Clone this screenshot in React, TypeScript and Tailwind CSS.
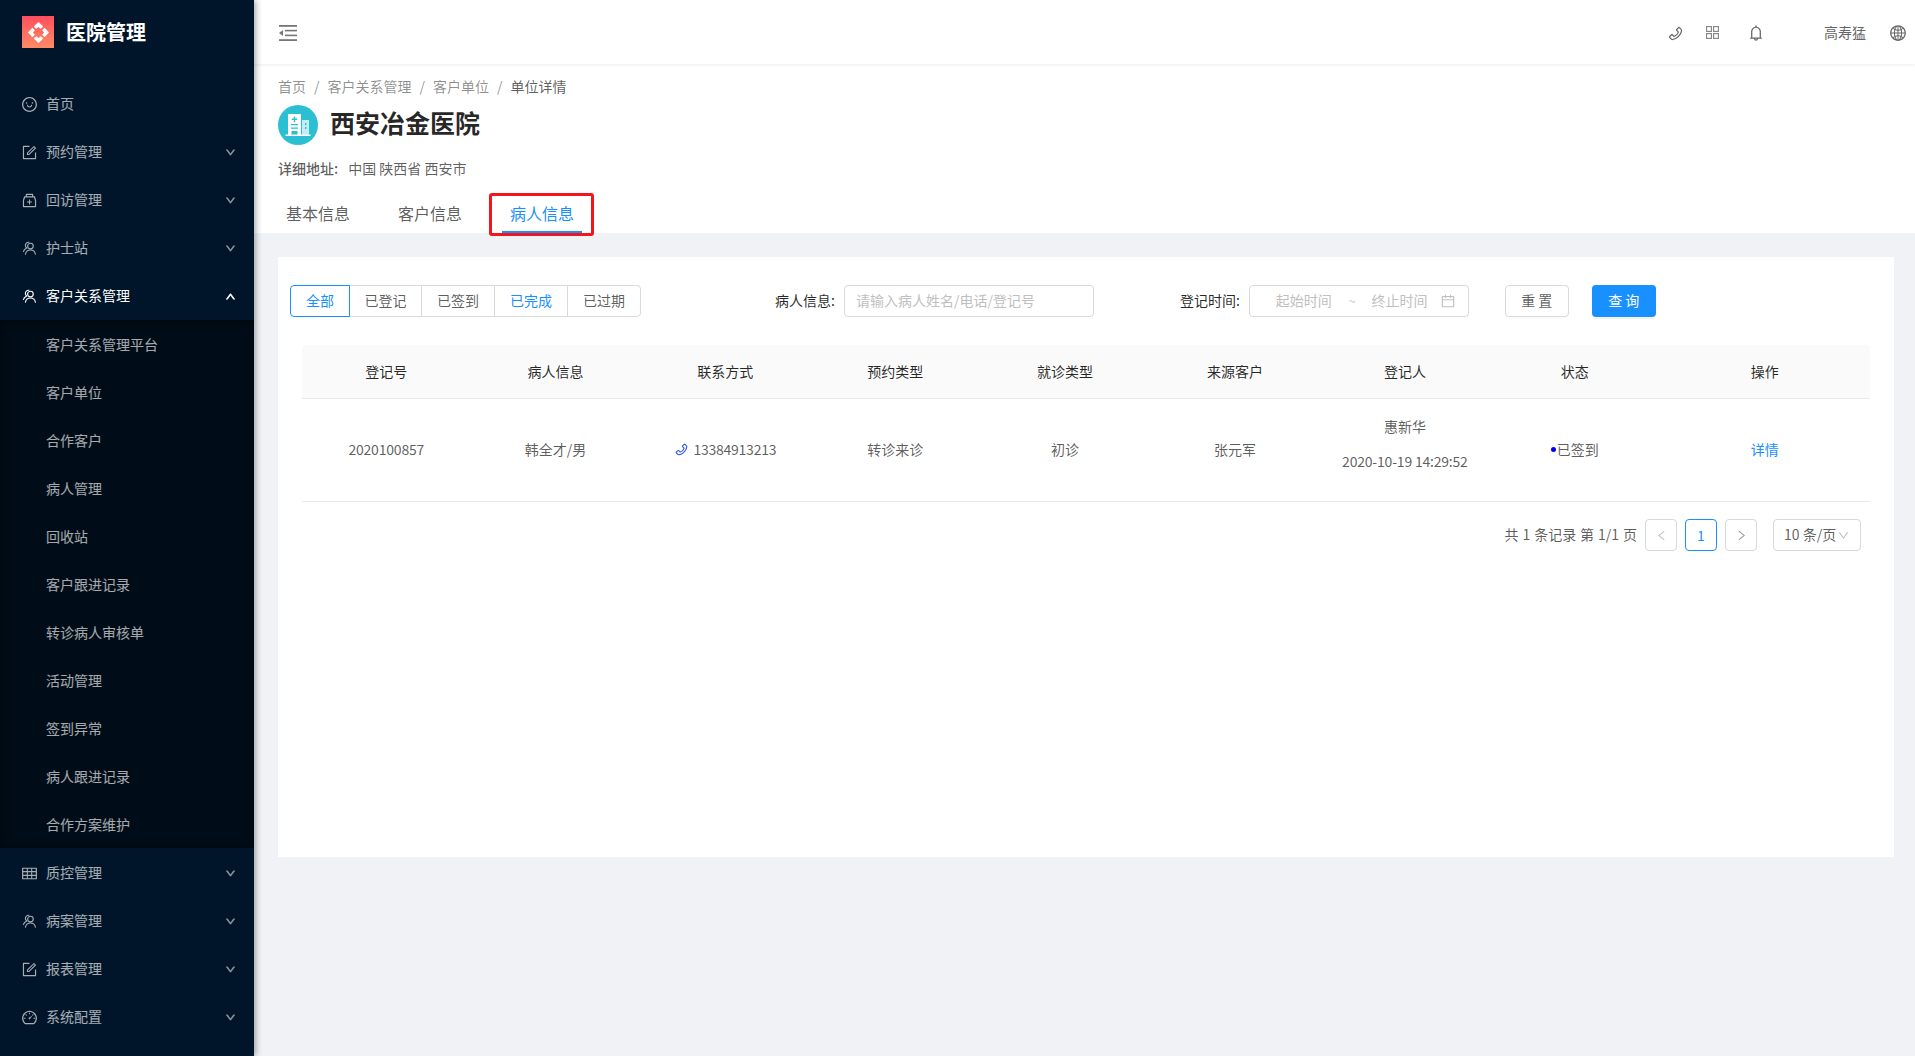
import React from 'react';
import {
  AiOutlineSmile,
  AiOutlineForm,
  AiOutlineMedicineBox,
  AiOutlineTable,
  AiOutlineDashboard,
  AiOutlineDown,
  AiOutlineUp,
  AiOutlineLeft,
  AiOutlineRight,
  AiOutlineBell,
  AiOutlineGlobal,
  AiOutlineCalendar,
  AiOutlinePhone,
} from 'react-icons/ai';

const FONT = '"Noto Sans CJK SC", "Noto Sans", sans-serif';

// 两个人叠在一起的菜单图标
const PeopleIcon = () => (
  <svg viewBox="0 0 16 16" className="w-[15px] h-[15px]" fill="none" stroke="currentColor" strokeWidth="1.2">
    <circle cx="9" cy="5.4" r="3" />
    <path d="M3.6 14.6c.4-3 2.6-5 5.4-5s5 2 5.4 5" />
    <path d="M7.8 1.4A3.4 3.4 0 0 0 3.6 4.6c0 1.2.5 2.2 1.4 2.9C3 8.4 1.8 9.8 1.4 11.6" />
  </svg>
);

const LOBE = 'M12 1 L16.500 5.200 Q17 6 16 6.800 L14.300 8.200 L12 6.200 L9.700 8.200 L8 6.800 Q7 6 7.500 5.200 Z';

const LogoIcon = () => (
  <div className="w-8 h-8 flex items-center justify-center bg-gradient-to-b from-[#ff4d5e] to-[#ff8a64]">
    <svg viewBox="0 0 24 24" className="w-[23px] h-[23px]" fill="#fff">
      <path d={LOBE} />
      <path d={LOBE} transform="rotate(90 12 12)" />
      <path d={LOBE} transform="rotate(180 12 12)" />
      <path d={LOBE} transform="rotate(270 12 12)" />
    </svg>
  </div>
);

const HospitalIcon = () => (
  <div className="w-10 h-10 rounded-full bg-[#2bc0d1] flex items-center justify-center shrink-0">
    <svg viewBox="0 0 32 32" className="w-8 h-8">
      <path fill="#fff" d="M6 5h13v21H6z" />
      <path fill="#c4eef3" d="M20 11h7v15h-7z" />
      <path fill="#fff" d="M3.500 25.500h25v1.500h-25z" />
      <path fill="#2bc0d1" d="M11.800 7.500h1.400v2h2v1.400h-2v2h-1.400v-2h-2V9.500h2zM9 15h7v1.300H9zM9 18.500h7v1.300H9zM9.500 22h6v3.500h-6z" />
      <path fill="#2bc0d1" d="M23 14h1.400v2H23zM23 18h1.400v2H23z" />
    </svg>
  </div>
);

const CollapseIcon = () => (
  <svg viewBox="0 0 18 16" className="w-[18px] h-4" fill="#777">
    <rect x="0" y="0" width="18" height="1.800" />
    <rect x="0" y="14.200" width="18" height="1.800" />
    <rect x="6" y="4.800" width="12" height="1.600" />
    <rect x="6" y="9.600" width="12" height="1.600" />
    <path d="M0 8l4-3v6z" />
  </svg>
);

const AppsIcon = () => (
  <svg viewBox="0 0 12 12" className="w-[13px] h-[13px]" fill="#fff" stroke="#888" strokeWidth="1.100">
    <rect x="0.500" y="0.500" width="4.500" height="4.500" />
    <rect x="7" y="0.500" width="4.500" height="4.500" />
    <rect x="0.500" y="7" width="4.500" height="4.500" />
    <rect x="7" y="7" width="4.500" height="4.500" />
  </svg>
);

const MenuItem = ({ icon, label, open, active }: { icon: React.ReactNode; label: string; open?: boolean; active?: boolean }) => (
  <div className={`h-12 flex items-center pl-[22px] pr-[18px] text-sm ${active ? 'text-white' : 'text-white/65'}`}>
    <span className="w-[14px] flex items-center justify-center text-[17px] shrink-0 [&>svg]:shrink-0">{icon}</span>
    <span className="ml-[10px] flex-1 pb-[2px]">{label}</span>
    {open === undefined ? null : open ? (
      <AiOutlineUp className="text-[11px] stroke-[80]" />
    ) : (
      <AiOutlineDown className="text-[11px] stroke-[80] opacity-70" />
    )}
  </div>
);

const subMenus = ['客户关系管理平台', '客户单位', '合作客户', '病人管理', '回收站', '客户跟进记录', '转诊病人审核单', '活动管理', '签到异常', '病人跟进记录', '合作方案维护'];

const Sidebar = () => (
  <aside className="w-[254px] shrink-0 h-[1056px] bg-[#001529] shadow-[2px_0_6px_rgba(0,21,41,0.35)] z-10 flex flex-col">
    <div className="h-[64px] flex items-center pl-[22px] mb-4">
      <LogoIcon />
      <span className="ml-3 text-[20px] font-bold text-white leading-none">医院管理</span>
    </div>
    <MenuItem icon={<AiOutlineSmile />} label="首页" />
    <MenuItem icon={<AiOutlineForm />} label="预约管理" open={false} />
    <MenuItem icon={<AiOutlineMedicineBox />} label="回访管理" open={false} />
    <MenuItem icon={<PeopleIcon />} label="护士站" open={false} />
    <MenuItem icon={<PeopleIcon />} label="客户关系管理" open active />
    <div className="bg-[#000c17] shadow-[inset_0_2px_8px_rgba(0,0,0,0.45)]">
      {subMenus.map((m) => (
        <div key={m} className="h-12 flex items-center pl-[46px] pb-[1px] text-sm text-white/65">{m}</div>
      ))}
    </div>
    <div className="pt-px">
      <MenuItem icon={<AiOutlineTable />} label="质控管理" open={false} />
      <MenuItem icon={<PeopleIcon />} label="病案管理" open={false} />
      <MenuItem icon={<AiOutlineForm />} label="报表管理" open={false} />
      <MenuItem icon={<AiOutlineDashboard />} label="系统配置" open={false} />
    </div>
  </aside>
);

const TopBar = () => (
  <header className="h-16 bg-white flex items-center pl-[25px] pr-[8px] pt-[2px] shadow-[0_1px_3px_rgba(0,21,41,0.08)] z-[5] text-[#666]">
    <CollapseIcon />
    <div className="ml-auto flex items-center">
      <AiOutlinePhone className="text-[17px] -scale-x-100 -rotate-90 text-[#666]" />
      <span className="ml-[22px] -mt-[2px]"><AppsIcon /></span>
      <AiOutlineBell className="ml-[28px] text-[18px]" />
      <span className="ml-[59px] text-sm pb-[2px]">高寿猛</span>
      <AiOutlineGlobal className="ml-[23px] text-[18px]" />
    </div>
  </header>
);

const PageHead = () => (
  <div className="bg-white h-[169px] pl-6 pt-3 flex flex-col">
    <div className="flex items-center text-sm leading-5 text-black/45">
      <span>首页</span>
      <span className="mx-2">/</span>
      <span>客户关系管理</span>
      <span className="mx-2">/</span>
      <span>客户单位</span>
      <span className="mx-2">/</span>
      <span className="text-black/65">单位详情</span>
    </div>
    <div className="flex items-center h-10 mt-[9px]">
      <HospitalIcon />
      <h1 className="ml-3 text-[25px] font-bold text-black/85 leading-10 pb-[7px]">西安冶金医院</h1>
    </div>
    <div className="flex items-center text-sm mt-[13px] leading-5">
      <span className="font-medium text-black/65">详细地址:</span>
      <span className="ml-[10px] text-black/65">中国 陕西省 西安市</span>
    </div>
    <div className="flex mt-auto h-[48px] text-base relative">
      <div className="w-[96px] pl-2 pt-4 text-black/65">基本信息</div>
      <div className="w-[112px] pl-[24px] pt-4 text-black/65">客户信息</div>
      <div className="w-[80px] ml-[16px] pt-4 text-center text-[#1890ff] border-b-2 border-[#1890ff]">病人信息</div>
      <div className="absolute left-[211px] top-[8px] w-[105px] h-[43px] border-[3px] border-[#f5141b] rounded-[3px]" />
    </div>
  </div>
);

const filters = [
  { label: '已登记', w: 'w-[73px]', blue: false },
  { label: '已签到', w: 'w-[74px]', blue: false },
  { label: '已完成', w: 'w-[74px]', blue: true },
  { label: '已过期', w: 'w-[74px]', blue: false },
];

const Toolbar = () => (
  <div className="flex items-center h-8 pl-3 text-sm">
    <div className="flex h-8">
      <div className="w-[60px] flex items-center justify-center pb-[2px] border border-[#1890ff] text-[#1890ff] rounded-l z-[1]">全部</div>
      {filters.map((f, i) => (
        <div
          key={f.label}
          className={`${f.w} -ml-px flex items-center justify-center pb-[2px] border border-[#d9d9d9] ${f.blue ? 'text-[#1890ff]' : 'text-black/65'} ${i === 3 ? 'rounded-r' : ''}`}
        >
          {f.label}
        </div>
      ))}
    </div>
    <span className="ml-[134px] pb-[2px] text-black/85">病人信息:</span>
    <div className="ml-[9px] w-[250px] h-8 pb-[2px] border border-[#d9d9d9] rounded flex items-center pl-[11px] text-[#bfbfbf]">请输入病人姓名/电话/登记号</div>
    <span className="ml-[86px] pb-[2px] text-black/85">登记时间:</span>
    <div className="ml-[9px] w-[220px] h-8 border border-[#d9d9d9] rounded flex items-center pl-[26px] text-[#bfbfbf]">
      <span className="pb-[2px]">起始时间</span>
      <span className="ml-[17px] text-xs">~</span>
      <span className="ml-[16px] pb-[2px]">终止时间</span>
      <AiOutlineCalendar className="ml-[13px] text-base" />
    </div>
    <button className="ml-[36px] w-[64px] h-8 pb-[2px] border border-[#d9d9d9] rounded text-black/65 shadow-[0_2px_0_rgba(0,0,0,0.015)]">重 置</button>
    <button className="ml-[23px] w-[64px] h-8 pb-[2px] rounded bg-[#1890ff] text-white shadow-[0_2px_0_rgba(0,0,0,0.045)]">查 询</button>
  </div>
);

const headers = ['登记号', '病人信息', '联系方式', '预约类型', '就诊类型', '来源客户', '登记人', '状态', '操作'];
const COLS = 'grid grid-cols-[168.5px_repeat(7,169.9px)_minmax(0,1fr)]';

const PatientTable = () => (
  <div className="mt-7 mx-6 text-sm">
    <div className={`${COLS} h-[54px] pb-[2px] items-center text-center bg-[#fafafa] border-b border-[#e8e8e8] text-black/85 rounded-t`}>
      {headers.map((h) => (
        <div key={h}>{h}</div>
      ))}
    </div>
    <div className={`${COLS} h-[103px] pb-[2px] items-center text-center border-b border-[#e8e8e8] text-black/65`}>
      <div className="tracking-[-0.2px]">2020100857</div>
      <div>韩全才/男</div>
      <div className="flex items-center justify-center gap-1">
        <AiOutlinePhone className="text-[15px] -scale-x-100 -rotate-90 text-[#2f54eb]" />
        <span className="tracking-[-0.25px]">13384913213</span>
      </div>
      <div>转诊来诊</div>
      <div>初诊</div>
      <div>张元军</div>
      <div className="flex flex-col items-center gap-[13px] pb-3">
        <span className="leading-[22px]">惠新华</span>
        <span className="leading-[22px] tracking-[-0.2px]">2020-10-19 14:29:52</span>
      </div>
      <div className="flex items-center justify-center">
        <span className="w-[5px] h-[5px] rounded-full bg-[#0000ff] mr-px" />
        <span>已签到</span>
      </div>
      <div className="text-[#1890ff]">详情</div>
    </div>
  </div>
);

const Pagination = () => (
  <div className="flex items-center justify-end h-8 mt-[17px] mr-[33px] text-sm text-black/65">
    <span className="mr-2 pb-[2px] [word-spacing:0.8px]">共 1 条记录 第 1/1 页</span>
    <div className="w-8 h-8 border border-[#d9d9d9] rounded flex items-center justify-center text-[#bfbfbf]">
      <AiOutlineLeft className="text-[13px]" />
    </div>
    <div className="w-8 h-8 ml-2 border border-[#1890ff] rounded flex items-center justify-center text-[#1890ff]">1</div>
    <div className="w-8 h-8 ml-2 border border-[#d9d9d9] rounded flex items-center justify-center text-[#999]">
      <AiOutlineRight className="text-[13px]" />
    </div>
    <div className="w-[88px] h-8 ml-4 border border-[#d9d9d9] rounded flex items-center pl-[10px]">
      <span className="pb-[2px]">10 条/页</span>
      <AiOutlineDown className="ml-px text-[13px] text-[#bfbfbf]" />
    </div>
  </div>
);

export default function App() {
  return (
    <div className="flex w-[1915px] h-[1056px] overflow-hidden bg-[#f0f2f5]" style={{ fontFamily: FONT }}>
      <Sidebar />
      <main className="flex-1 flex flex-col min-w-0">
        <TopBar />
        <PageHead />
        <div className="ml-6 mr-[21px] mt-6 h-[600px] bg-white pt-7">
          <Toolbar />
          <PatientTable />
          <Pagination />
        </div>
      </main>
    </div>
  );
}
